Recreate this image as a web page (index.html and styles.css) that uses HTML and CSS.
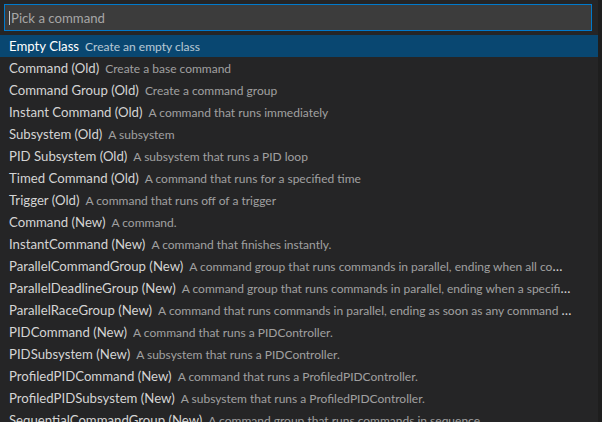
FILE: index.html
```html
<!DOCTYPE html>
<html>
<head>
<meta charset="utf-8">
<link rel="stylesheet" href="styles.css">
</head>
<body>
<div class="widget">
  <div class="input-wrap">
    <div class="input"><span class="caret"></span><span class="placeholder">Pick a command</span></div>
  </div>
  <div class="list">
    <div class="row selected"><span class="label">Empty Class</span><span class="desc">Create an empty class</span></div>
    <div class="row"><span class="label">Command (Old)</span><span class="desc">Create a base command</span></div>
    <div class="row"><span class="label">Command Group (Old)</span><span class="desc">Create a command group</span></div>
    <div class="row"><span class="label">Instant Command (Old)</span><span class="desc">A command that runs immediately</span></div>
    <div class="row"><span class="label">Subsystem (Old)</span><span class="desc">A subsystem</span></div>
    <div class="row"><span class="label">PID Subsystem (Old)</span><span class="desc">A subsystem that runs a PID loop</span></div>
    <div class="row"><span class="label">Timed Command (Old)</span><span class="desc">A command that runs for a specified time</span></div>
    <div class="row"><span class="label">Trigger (Old)</span><span class="desc">A command that runs off of a trigger</span></div>
    <div class="row"><span class="label">Command (New)</span><span class="desc">A command.</span></div>
    <div class="row"><span class="label">InstantCommand (New)</span><span class="desc">A command that finishes instantly.</span></div>
    <div class="row"><span class="label">ParallelCommandGroup (New)</span><span class="desc">A command group that runs commands in parallel, ending when all commands have finished.</span></div>
    <div class="row"><span class="label">ParallelDeadlineGroup (New)</span><span class="desc">A command group that runs commands in parallel, ending when a specific command has finished.</span></div>
    <div class="row"><span class="label">ParallelRaceGroup (New)</span><span class="desc">A command that runs commands in parallel, ending as soon as any command has finished.</span></div>
    <div class="row"><span class="label">PIDCommand (New)</span><span class="desc">A command that runs a PIDController.</span></div>
    <div class="row"><span class="label">PIDSubsystem (New)</span><span class="desc">A subsystem that runs a PIDController.</span></div>
    <div class="row"><span class="label">ProfiledPIDCommand (New)</span><span class="desc">A command that runs a ProfiledPIDController.</span></div>
    <div class="row"><span class="label">ProfiledPIDSubsystem (New)</span><span class="desc">A subsystem that runs a ProfiledPIDController.</span></div>
    <div class="row"><span class="label">SequentialCommandGroup (New)</span><span class="desc">A command group that runs commands in sequence.</span></div>
  </div>
</div>
</body>
</html>
```

FILE: styles.css
```css
html, body {
  margin: 0;
  padding: 0;
  background: #1e1e1e;
  overflow: hidden;
}
body {
  width: 602px;
  height: 422px;
  font-family: Lato, "Open Sans", sans-serif;
  color: #d4d4d4;
}
.widget {
  width: 598px;
  height: 422px;
  background: #252526;
  overflow: hidden;
}
.input-wrap {
  padding: 4px 6px 4px 4px;
}
.input {
  box-sizing: border-box;
  height: 27px;
  background: #3c3c3c;
  border: 1px solid #007acc;
  display: flex;
  align-items: center;
  padding-left: 4px;
  font-size: 13.2px;
}
.caret {
  width: 1px;
  height: 14px;
  margin-right: 1px;
  background: #cccccc;
}
.placeholder {
  color: #a6a6a6;
}
.list {
  display: flex;
  flex-direction: column;
}
.row {
  height: 22px;
  line-height: 22px;
  padding: 0 26px 0 9px;
  white-space: nowrap;
  overflow: hidden;
  text-overflow: ellipsis;
  font-size: 13.2px;
}
.row.selected {
  background: #094771;
  color: #ffffff;
}
.desc {
  margin-left: 6px;
  font-size: 12px;
  opacity: 0.7;
}
```
